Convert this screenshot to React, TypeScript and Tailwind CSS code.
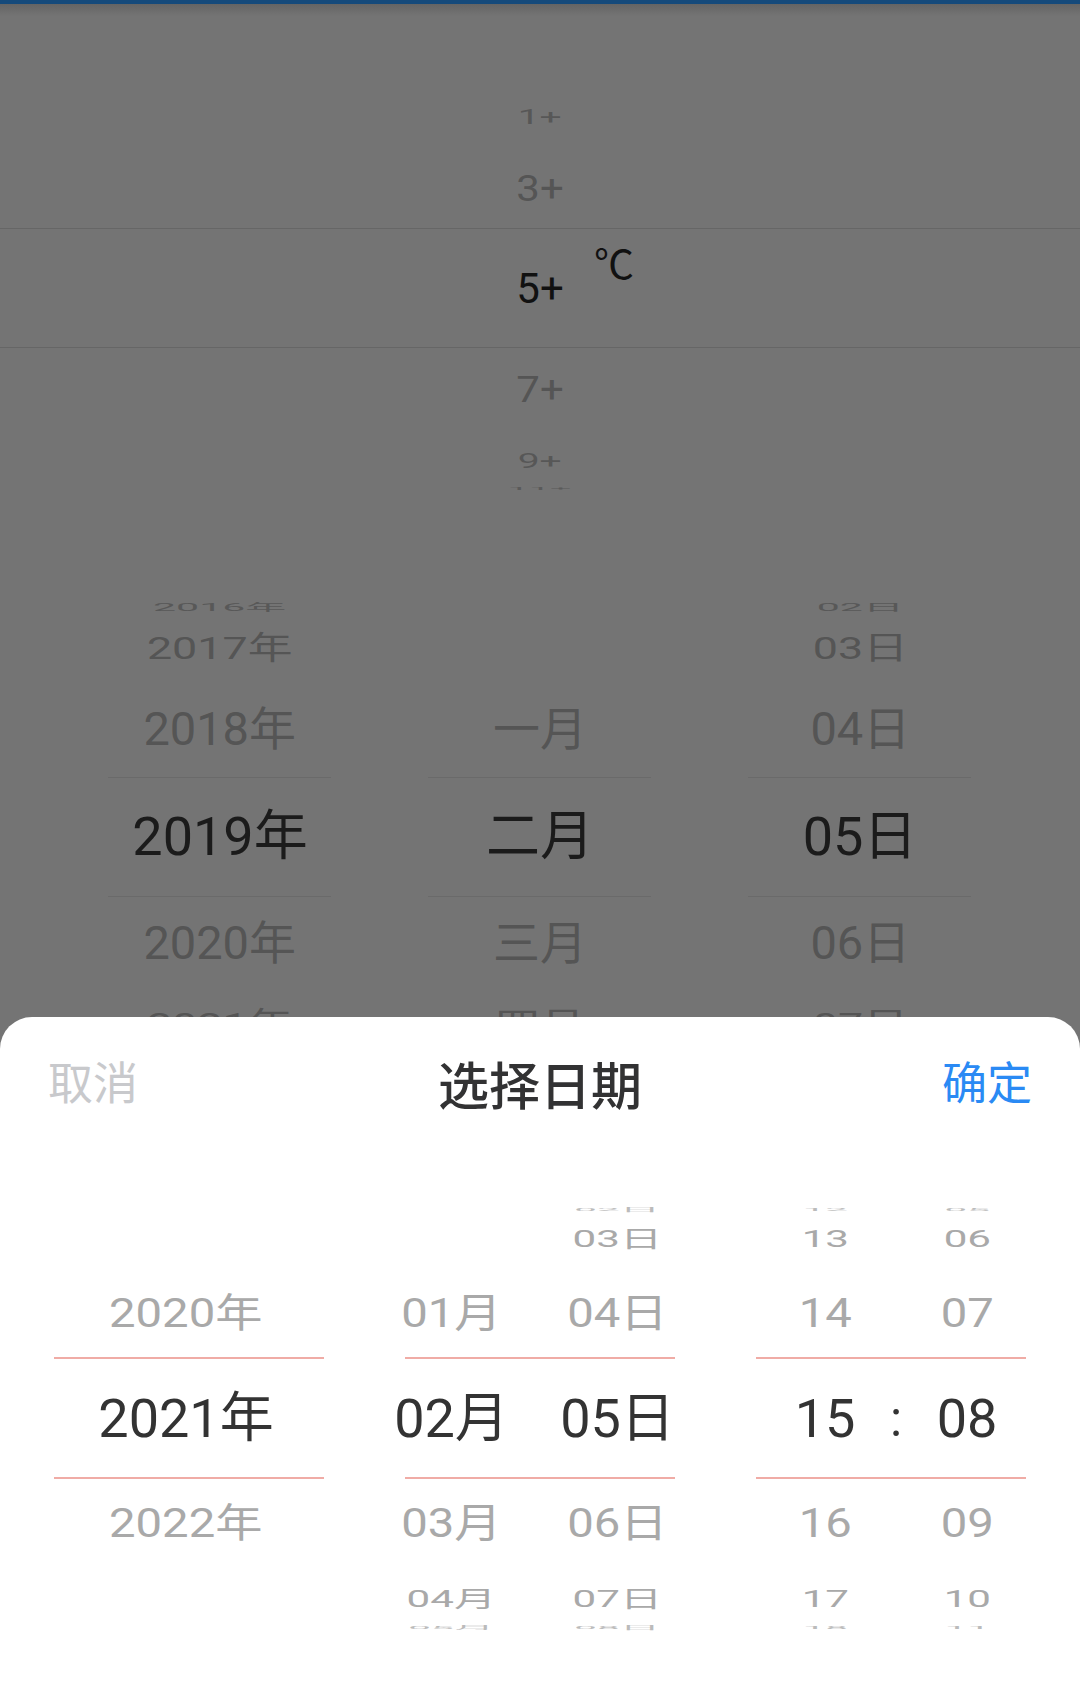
import React from "react";

type Slot = { h: string; t: string };

// row heights + 3d-ish squash for each of the 7 visible wheel rows
const tempSlots: Slot[] = [
  { h: "h-[14px]", t: "scale-x-[0.9] scale-y-[0.1] text-[#5a5a5a]" },
  { h: "h-[42px]", t: "scale-x-[0.93] scale-y-[0.47] text-[#575757]" },
  { h: "h-[101px]", t: "scale-y-[0.87] text-[#555555]" },
  { h: "h-[100px]", t: "text-[#111111]" },
  { h: "h-[101px]", t: "scale-y-[0.87] text-[#555555]" },
  { h: "h-[42px]", t: "scale-x-[0.93] scale-y-[0.47] text-[#575757]" },
  { h: "h-[14px]", t: "scale-x-[0.9] scale-y-[0.1] text-[#5a5a5a]" },
];

const dimSlots: Slot[] = [
  { h: "h-[27px]", t: "scale-x-[0.76] scale-y-[0.19] text-[#585858]" },
  { h: "h-[55px]", t: "scale-x-[0.83] scale-y-[0.58] text-[#555555]" },
  { h: "h-[107px]", t: "scale-x-[0.87] scale-y-[0.85] text-[#555555]" },
  { h: "h-[107px]", t: "text-[#1b1b1b]" },
  { h: "h-[107px]", t: "scale-x-[0.87] scale-y-[0.85] text-[#555555]" },
  { h: "h-[55px]", t: "scale-x-[0.83] scale-y-[0.58] text-[#555555]" },
  { h: "h-[27px]", t: "scale-x-[0.76] scale-y-[0.19] text-[#585858]" },
];

const sheetSlots: Slot[] = [
  { h: "h-[13px]", t: "scale-x-[0.75] scale-y-[0.08] text-[#bbbbbb]" },
  { h: "h-[45px]", t: "scale-x-[0.78] scale-y-[0.43] text-[#a9a9a9]" },
  { h: "h-[105px]", t: "scale-x-[0.875] scale-y-[0.74] text-[#a9a9a9]" },
  { h: "h-[105px]", t: "text-[#333333]" },
  { h: "h-[105px]", t: "scale-x-[0.875] scale-y-[0.74] text-[#a9a9a9]" },
  { h: "h-[45px]", t: "scale-x-[0.78] scale-y-[0.43] text-[#a9a9a9]" },
  { h: "h-[13px]", t: "scale-x-[0.75] scale-y-[0.08] text-[#bbbbbb]" },
];

function Wheel({ items, slots, className }: { items: string[]; slots: Slot[]; className: string }) {
  return (
    <div className={"flex flex-col " + className}>
      {slots.map((s, i) => (
        <div key={i} className={"flex items-center justify-center " + s.h}>
          <span className={"whitespace-nowrap leading-none " + s.t}>{items[i]}</span>
        </div>
      ))}
    </div>
  );
}

function DimColumn({ items }: { items: string[] }) {
  return (
    <div className="relative w-[320px]">
      <Wheel items={items} slots={dimSlots} className="text-[54px]" />
      <div className="absolute left-[48px] top-[183px] h-px w-[223px] bg-[#6a6a6a]" />
      <div className="absolute left-[48px] top-[302px] h-px w-[223px] bg-[#6a6a6a]" />
    </div>
  );
}

function Lines() {
  return (
    <>
      <div className="absolute left-0 right-0 top-[154px] h-[2px] bg-[#f0aca6]" />
      <div className="absolute left-0 right-0 top-[274px] h-[2px] bg-[#f0aca6]" />
    </>
  );
}

export default function App() {
  return (
    <div className="relative h-[1689px] w-[1080px] overflow-hidden bg-[#747474] font-['Roboto','Noto_Sans_CJK_SC',sans-serif]">
      <div className="h-[4px] bg-[#154a7b]" />
      <div className="h-[12px] bg-gradient-to-b from-[#646464] to-[#747474]" />

      {/* temperature wheel */}
      <div className="relative mt-[66px]">
        <Wheel items={["", "1+", "3+", "5+", "7+", "9+", "11+"]} slots={tempSlots} className="text-[42px]" />
        <div className="absolute left-0 right-0 top-[146px] h-px bg-[#666666]" />
        <div className="absolute left-0 right-0 top-[265px] h-px bg-[#666666]" />
        <span className="absolute left-[594px] top-[164px] text-[40px] leading-none text-[#111111]">℃</span>
      </div>

      {/* date wheel behind the mask, cut where the sheet begins */}
      <div className="mt-[98px] flex h-[423px] overflow-hidden px-[60px]">
        <DimColumn items={["2016年", "2017年", "2018年", "2019年", "2020年", "2021年", "2022年"]} />
        <DimColumn items={["", "", "一月", "二月", "三月", "四月", "五月"]} />
        <DimColumn items={["02日", "03日", "04日", "05日", "06日", "07日", "08日"]} />
      </div>

      {/* bottom sheet */}
      <div className="absolute bottom-0 left-0 right-0 top-[1017px] rounded-t-[32px] bg-white">
        <div className="flex h-[136px] items-center justify-between px-[48px]">
          <span className="text-[45px] text-[#c8c9cc]">取消</span>
          <span className="translate-y-[3px] text-[51px] font-medium text-[#323233]">选择日期</span>
          <span className="text-[45px] text-[#2a8af4]">确定</span>
        </div>

        <div className="mt-[50px] flex gap-[81px] px-[54px] text-[54px]">
          <div className="relative w-[270px]">
            <Wheel items={["", "", "2020年", "2021年", "2022年", "", ""]} slots={sheetSlots} className="pr-[6px]" />
            <Lines />
          </div>
          <div className="relative flex w-[270px]">
            <Wheel items={["", "", "01月", "02月", "03月", "04月", "05月"]} slots={sheetSlots} className="w-[135px] pr-[42px]" />
            <Wheel items={["02日", "03日", "04日", "05日", "06日", "07日", "08日"]} slots={sheetSlots} className="w-[135px] pl-[20px]" />
            <Lines />
          </div>
          <div className="relative flex w-[270px]">
            <Wheel items={["12", "13", "14", "15", "16", "17", "18"]} slots={sheetSlots} className="w-[138px]" />
            <div className="flex w-0 items-center justify-center">
              <span className="translate-x-[2px] text-[50px] leading-none text-[#333333]">:</span>
            </div>
            <Wheel items={["05", "06", "07", "08", "09", "10", "11"]} slots={sheetSlots} className="w-[132px] pl-[14px]" />
            <Lines />
          </div>
        </div>
      </div>
    </div>
  );
}
